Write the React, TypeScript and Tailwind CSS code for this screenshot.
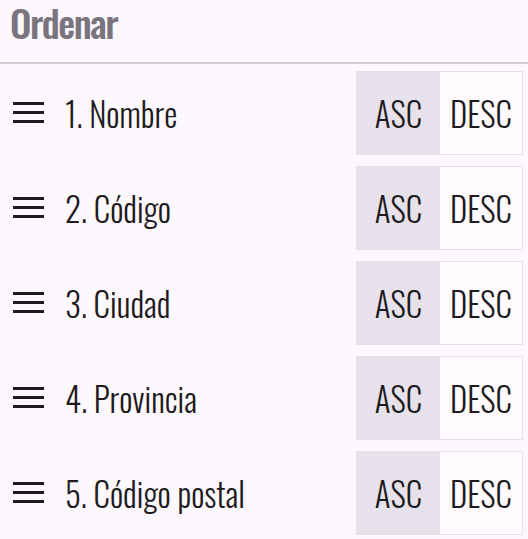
import React from "react";

const items = ["1. Nombre", "2. Código", "3. Ciudad", "4. Provincia", "5. Código postal"];

function MenuIcon() {
  return (
    <svg width="31" height="24" viewBox="0 0 31 24" className="shrink-0">
      <rect x="0" y="1" width="31" height="3" fill="#1d1b20" />
      <rect x="0" y="10" width="31" height="3" fill="#1d1b20" />
      <rect x="0" y="19" width="31" height="3" fill="#1d1b20" />
    </svg>
  );
}

export default function App() {
  return (
    <div className="min-h-screen w-full bg-[#fdf8fd] font-['Oswald',sans-serif] text-[#1d1b20]">
      <div className="h-[64px] px-[10px] border-b-2 border-[#cfcad3]">
        <div className="text-[38px] font-medium tracking-[-1.5px] text-[#79747e] leading-[44px]">Ordenar</div>
      </div>
      <div className="flex flex-col gap-[11px] pt-[7px]">
        {items.map((label) => (
          <div key={label} className="h-[84px] flex items-center pl-[13px] pr-[5px]">
            <MenuIcon />
            <span className="ml-[21px] flex-1 text-[33px] font-light leading-none">{label}</span>
            <div className="flex h-full border border-[#e6e1e9]">
              <div className="w-[83px] h-full flex items-center justify-center bg-[#e7e1ec] text-[33px] font-light leading-none">
                ASC
              </div>
              <div className="w-[82px] h-full flex items-center justify-center bg-[#fffbff] text-[33px] font-light leading-none">
                DESC
              </div>
            </div>
          </div>
        ))}
      </div>
    </div>
  );
}
